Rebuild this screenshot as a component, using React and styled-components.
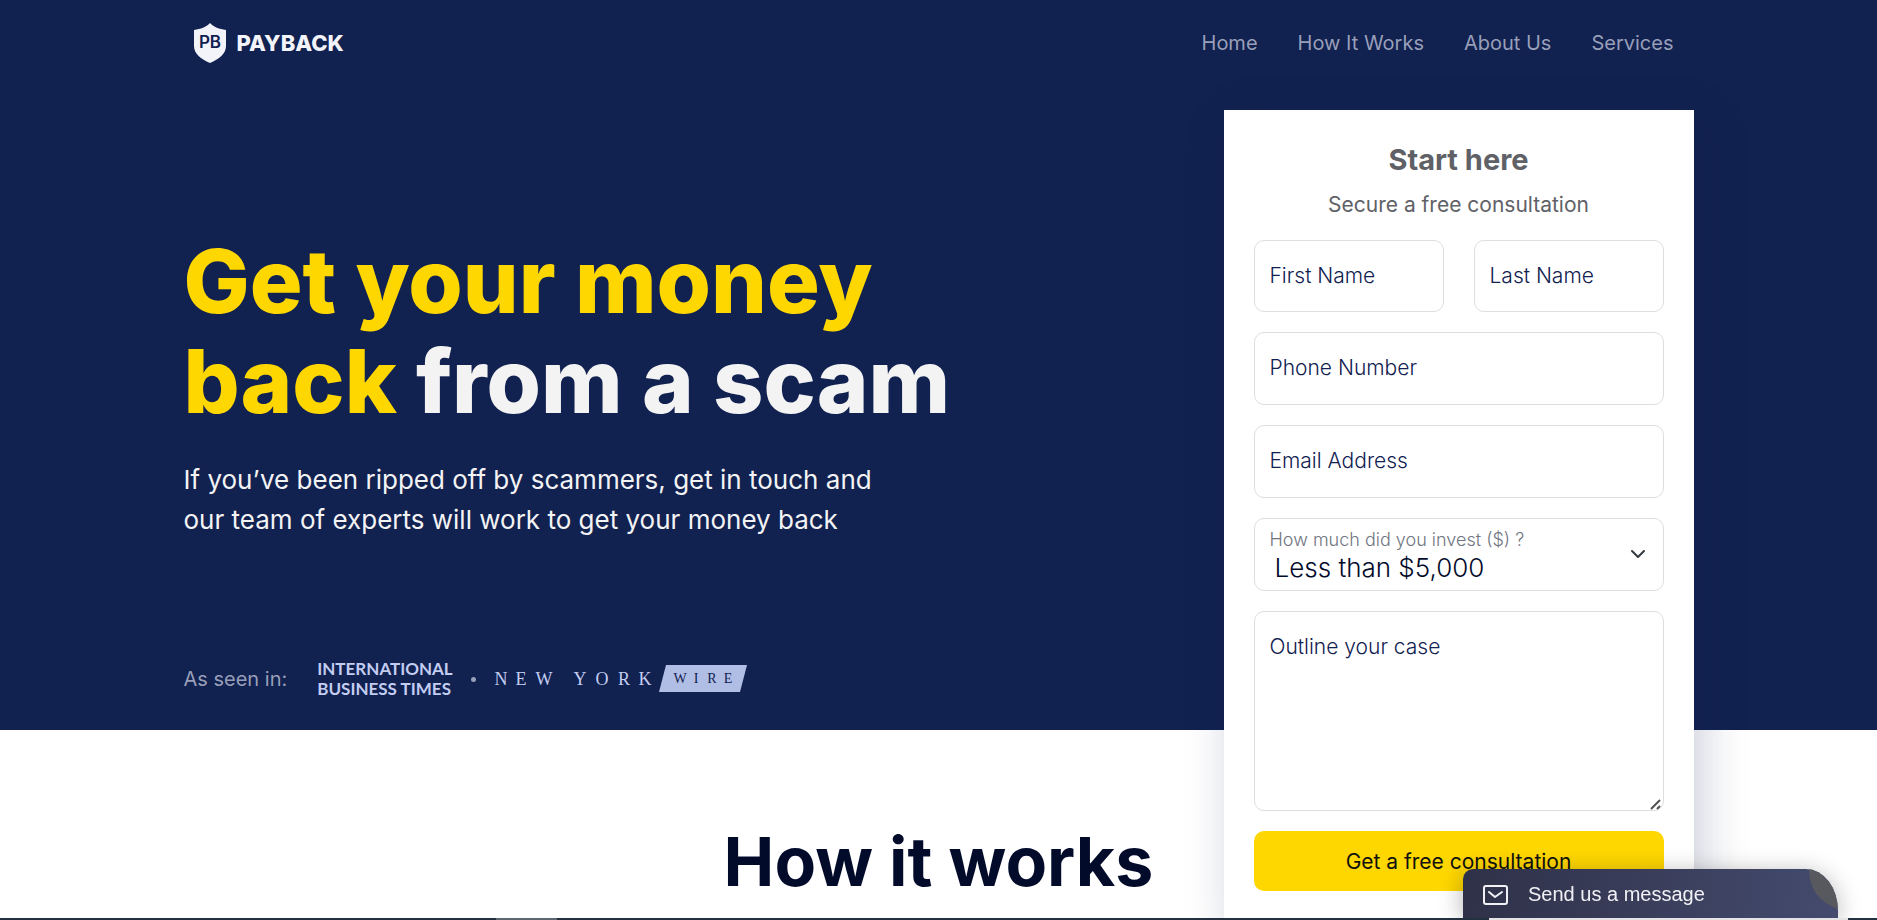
import React, { useState } from 'react';
import styled, { createGlobalStyle } from 'styled-components';

const navItems = ['Home', 'How It Works', 'About Us', 'Services'];
const amounts = ['Less than $5,000', '$5,000 - $20,000', '$20,000 - $50,000', 'More than $50,000'];

const Field = ({ id, label, type = 'text' }) => (
    <FieldBox>
        <TextInput id={id} type={type} placeholder=" " />
        <FieldLabel htmlFor={id}>{label}</FieldLabel>
    </FieldBox>
);

const Header = () => (
    <HeaderBar>
        <Brand href="#home">
            <svg width="32" height="40" viewBox="0 0 32 40" aria-hidden="true">
                <path d="M16 0C20 4 25 6 32 7V23C32 31 25 36 16 40C7 36 0 31 0 23V7C7 6 12 4 16 0Z" fill="#f3f4fa" />
                <text x="16" y="25" textAnchor="middle" fontFamily="Inter, sans-serif" fontWeight="600" fontSize="17" fill="#112150">PB</text>
            </svg>
            PAYBACK
        </Brand>
        <Nav>
            {navItems.map(item => (
                <NavLink key={item} href="#">{item}</NavLink>
            ))}
        </Nav>
    </HeaderBar>
);

const Press = () => (
    <PressRow>
        <PressLabel>As seen in:</PressLabel>
        <TimesLogo>
            <span>INTERNATIONAL</span>
            <span>BUSINESS TIMES</span>
        </TimesLogo>
        <Dot />
        <WireLogo>
            <svg width="254" height="28" viewBox="0 0 254 28" role="img" aria-label="New York Wire">
                <path d="M172 0H253L246 27H165Z" fill="#b0bee6" />
                <g fontFamily="Liberation Serif, serif" fontSize="18" fill="#c3cdf2">
                    {['N', 'E', 'W', 'Y', 'O', 'R', 'K'].map((c, i) => (
                        <text key={c} x={[7, 27, 50, 86, 108, 130, 151][i]} y="20" textAnchor="middle">{c}</text>
                    ))}
                </g>
                <g fontFamily="Liberation Serif, serif" fontSize="14" fill="#112150">
                    {['W', 'I', 'R', 'E'].map((c, i) => (
                        <text key={c} x={[186, 202, 218, 234][i]} y="18" textAnchor="middle">{c}</text>
                    ))}
                </g>
            </svg>
        </WireLogo>
    </PressRow>
);

const ConsultationForm = () => {
    const [amount, setAmount] = useState(amounts[0]);

    return (
        <Card onSubmit={(e) => e.preventDefault()}>
            <CardTitle>Start here</CardTitle>
            <CardText>Secure a free consultation</CardText>
            <Fields>
                <NameRow>
                    <Field id="first" label="First Name" />
                    <Field id="last" label="Last Name" />
                </NameRow>
                <Field id="phone" label="Phone Number" type="tel" />
                <Field id="email" label="Email Address" type="email" />
                <FieldBox>
                    <SelectLabel htmlFor="amount">How much did you invest ($) ?</SelectLabel>
                    <Select id="amount" value={amount} onChange={(e) => setAmount(e.target.value)}>
                        {amounts.map(a => <option key={a}>{a}</option>)}
                    </Select>
                    <Chevron width="16" height="16" viewBox="0 0 16 16" aria-hidden="true">
                        <path d="M2 5L8 11L14 5" fill="none" stroke="#343a40" strokeWidth="2" strokeLinecap="round" strokeLinejoin="round" />
                    </Chevron>
                </FieldBox>
                <FieldBox>
                    <CaseInput id="case" placeholder=" " />
                    <FieldLabel htmlFor="case">Outline your case</FieldLabel>
                    <Grip width="12" height="12" viewBox="0 0 12 12" aria-hidden="true">
                        <path d="M1 11L10 2M7 11L10 8" fill="none" stroke="#505050" strokeWidth="2" />
                    </Grip>
                </FieldBox>
                <SubmitButton type="submit">Get a free consultation</SubmitButton>
            </Fields>
        </Card>
    );
};

export default function App() {
    return (
        <Page>
            <GlobalStyle />
            <Hero>
                <Container>
                    <Header />
                    <HeroBody>
                        <Intro>
                            <Title><mark>Get your money<br />back</mark> from a scam</Title>
                            <Lead>If you’ve been ripped off by scammers, get in touch and<br />our team of experts will work to get your money back</Lead>
                            <Press />
                        </Intro>
                        <ConsultationForm />
                    </HeroBody>
                </Container>
            </Hero>
            <Works>
                <WorksTitle>How it works</WorksTitle>
            </Works>
            <ChatButton type="button">
                <svg width="26" height="22" viewBox="0 0 26 22" fill="none" stroke="#f1f1f5" strokeWidth="2" strokeLinecap="round" strokeLinejoin="round" aria-hidden="true">
                    <rect x="1" y="2" width="23" height="18" rx="2" />
                    <path d="M6 8L12 13L19 8" />
                </svg>
                Send us a message
            </ChatButton>
            <BottomEdge>
                <EdgeMark />
                <EdgeGap />
            </BottomEdge>
        </Page>
    );
}

const GlobalStyle = createGlobalStyle`
  * {
    box-sizing: border-box;
  }
  body {
    margin: 0;
    font-family: Inter, sans-serif;
    overflow: hidden;
  }
`;

const Page = styled.div`
  height: 100vh;
  overflow: hidden;
  background: #ffffff;
`;

const Hero = styled.section`
  height: 730px;
  background: #112150;
`;

const Container = styled.div`
  max-width: 1510px;
  margin: 0 auto;
`;

const HeaderBar = styled.header`
  display: flex;
  align-items: center;
  justify-content: space-between;
  height: 86px;
  padding: 0 20px 0 10px;
`;

const Brand = styled.a`
  display: flex;
  align-items: center;
  gap: 11px;
  color: #f3f4fa;
  font-size: 22px;
  font-weight: 800;
  text-decoration: none;
`;

const Nav = styled.nav`
  display: flex;
  gap: 40px;
`;

const NavLink = styled.a`
  color: #989fb8;
  font-size: 20px;
  text-decoration: none;
`;

const HeroBody = styled.div`
  display: flex;
  align-items: flex-start;
  justify-content: space-between;
  padding-top: 24px;
`;

const Intro = styled.div`
  padding-top: 121px;
`;

const Title = styled.h1`
  margin: 0;
  color: #f3f3f4;
  font-size: 88px;
  font-weight: 800;
  line-height: 100px;

  mark {
    background: none;
    color: #ffd700;
  }
`;

const Lead = styled.p`
  margin: 29px 0 0;
  color: #f3f3f4;
  font-size: 26px;
  line-height: 40px;
`;

const PressRow = styled.div`
  display: flex;
  align-items: center;
  margin-top: 119px;
`;

const PressLabel = styled.span`
  color: #989fb8;
  font-size: 20px;
`;

const TimesLogo = styled.div`
  display: flex;
  flex-direction: column;
  margin-left: 30px;
  color: #c3cdf2;
  font-family: Lato, sans-serif;
  font-size: 17px;
  font-weight: 700;
  line-height: 20px;
`;

const Dot = styled.span`
  width: 5px;
  height: 5px;
  margin: 0 18px;
  border-radius: 50%;
  background: #989fb8;
`;

const WireLogo = styled.div`
  display: flex;
`;

const Card = styled.form`
  position: relative;
  width: 470px;
  padding: 30px 30px 36px;
  background: #ffffff;
  box-shadow: 8px 12px 44px rgba(17, 33, 80, 0.22);
`;

const CardTitle = styled.h2`
  margin: 0;
  color: #606166;
  font-size: 29px;
  font-weight: 700;
  line-height: 40px;
  text-align: center;
`;

const CardText = styled.p`
  margin: 10px 0 20px;
  color: #606166;
  font-size: 21px;
  line-height: 30px;
  text-align: center;
`;

const Fields = styled.div`
  display: flex;
  flex-direction: column;
  gap: 20px;
`;

const NameRow = styled.div`
  display: grid;
  grid-template-columns: 1fr 1fr;
  gap: 30px;

  input {
    height: 72px;
  }
`;

const FieldBox = styled.div`
  position: relative;
  display: flex;
`;

const FieldLabel = styled.label`
  position: absolute;
  top: 21px;
  left: 16px;
  color: #112150;
  font-size: 21px;
  font-weight: 300;
  line-height: 30px;
  pointer-events: none;
`;

const TextInput = styled.input`
  width: 100%;
  height: 73px;
  padding: 0 15px;
  border: 1px solid #dcdee1;
  border-radius: 10px;
  background: #ffffff;
  color: #112150;
  font-family: inherit;
  font-size: 21px;
  font-weight: 300;

  &:focus + label,
  &:not(:placeholder-shown) + label {
    display: none;
  }
`;

const CaseInput = styled(TextInput).attrs({ as: 'textarea' })`
  height: 200px;
  padding: 20px 15px;
  line-height: 30px;
  resize: vertical;

  &::-webkit-resizer {
    background: transparent;
  }
`;

const Grip = styled.svg`
  position: absolute;
  right: 2px;
  bottom: 1px;
  pointer-events: none;
`;

const SelectLabel = styled(FieldLabel)`
  top: 10px;
  color: #707580;
  font-size: 18px;
  line-height: 24px;
`;

const Select = styled.select`
  width: 100%;
  height: 73px;
  padding: 25px 40px 0 20px;
  border: 1px solid #dcdee1;
  border-radius: 10px;
  background: #ffffff;
  appearance: none;
  color: #030b2b;
  font-family: inherit;
  font-size: 26px;
  font-weight: 300;
`;

const Chevron = styled.svg`
  position: absolute;
  top: 28px;
  right: 18px;
  pointer-events: none;
`;

const SubmitButton = styled.button`
  height: 60px;
  border: none;
  border-radius: 10px;
  background: #ffd700;
  color: #101010;
  font-family: inherit;
  font-size: 21px;
  cursor: pointer;
`;

const Works = styled.section`
  padding-top: 91px;
  text-align: center;
`;

const WorksTitle = styled.h2`
  margin: 0;
  color: #030b2b;
  font-size: 68px;
  font-weight: 700;
  line-height: 80px;
`;

const BottomEdge = styled.div`
  position: fixed;
  right: 0;
  bottom: 0;
  left: 0;
  display: flex;
  justify-content: space-between;
  height: 2px;
  padding: 0 29px 0 496px;
  background: #22303f;
`;

const EdgeMark = styled.div`
  width: 61px;
  background: #5a6670;
`;

const EdgeGap = styled.div`
  width: 359px;
  background: #e4e4e6;
`;

const ChatButton = styled.button`
  position: fixed;
  right: 39px;
  bottom: 2px;
  display: flex;
  align-items: center;
  gap: 19px;
  width: 375px;
  height: 49px;
  padding: 2px 20px 0;
  overflow: hidden;
  border: none;
  border-radius: 10px 32px 0 0 / 10px 42px 0 0;
  background: linear-gradient(100deg, #2f3148, #444b6e);
  box-shadow: 0 4px 24px rgba(0, 0, 0, 0.3);
  color: #f1f1f5;
  font-family: 'Liberation Sans', sans-serif;
  font-size: 20px;
  cursor: pointer;

  &::after {
    content: '';
    position: absolute;
    top: -37px;
    right: -49px;
    width: 78px;
    height: 78px;
    border-radius: 50%;
    background: #58595f;
  }
`;
